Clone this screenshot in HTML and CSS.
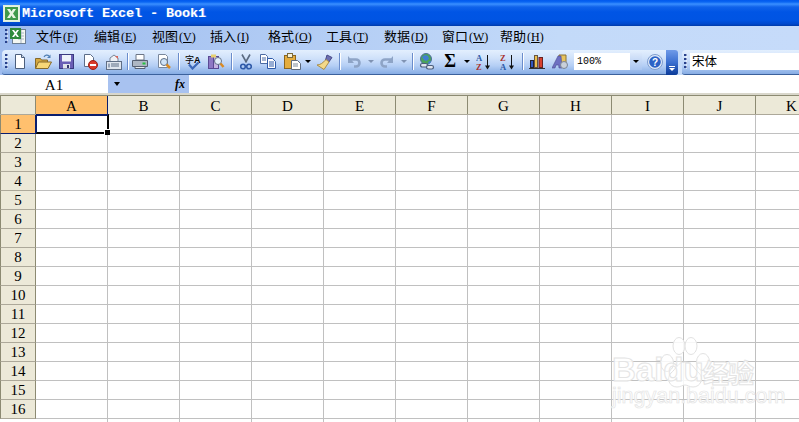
FILE: index.html
```html
<!DOCTYPE html>
<html lang="zh">
<head>
<meta charset="utf-8">
<title>Microsoft Excel - Book1</title>
<link rel="stylesheet" href="styles.css">
</head>
<body>
<div class="app">
  <header class="titlebar">
    <svg class="appicon" width="17" height="17" viewBox="0 0 17 17"><rect x=".5" y=".5" width="16" height="16" fill="#e8f3e4" stroke="#dfeedd"/><rect x="2" y="2" width="13" height="13" fill="#3f9a4c"/><path d="M4 4h3l1.500 2.500L10 4h3l-3 4.500L13 13h-3L8.500 10.500 7 13H4l3-4.500z" fill="#e8f5e4"/></svg>
    <span class="title">Microsoft Excel - Book1</span>
  </header>

  <nav class="menubar">
    <span class="grip"></span>
    <svg class="menuicon" width="18" height="18" viewBox="0 0 18 18"><rect x="3.500" y="2.500" width="13" height="14" fill="#f4f7f2" stroke="#6d7f93"/><path d="M9 6h6M9 9h6M9 12h6M12 3v13" stroke="#a7b5c5"/><rect x="1" y="1" width="11" height="11" fill="#2f8a3c"/><path d="M3 3h2l1.500 2L8 3h2L7.500 6.500 10 10H8L6.500 8 5 10H3l2.500-3.500z" fill="#fff"/></svg>
    <div class="menus">
      <span class="menu">文件<span class="key">(<u>F</u>)</span></span>
      <span class="menu">编辑<span class="key">(<u>E</u>)</span></span>
      <span class="menu">视图<span class="key">(<u>V</u>)</span></span>
      <span class="menu">插入<span class="key">(<u>I</u>)</span></span>
      <span class="menu">格式<span class="key">(<u>O</u>)</span></span>
      <span class="menu">工具<span class="key">(<u>T</u>)</span></span>
      <span class="menu">数据<span class="key">(<u>D</u>)</span></span>
      <span class="menu">窗口<span class="key">(<u>W</u>)</span></span>
      <span class="menu">帮助<span class="key">(<u>H</u>)</span></span>
    </div>
  </nav>

  <div class="toolrow">
    <div class="toolbar std">
      <span class="grip"></span>
      <span class="tool"><svg width="16" height="16" viewBox="0 0 16 16"><path d="M3.500 .5h6l3 3v11h-9z" fill="#fff" stroke="#4b5f7d"/><path d="M9.500.5v3h3" fill="#cfdbea" stroke="#4b5f7d"/></svg></span>
      <span class="tool"><svg width="17" height="16" viewBox="0 0 17 16"><path d="M.5 4.500h5l1 1.500h6v8H.5z" fill="#d6a93f" stroke="#85692a"/><path d="M.5 14.500l3-6.500h13l-3.500 6.500z" fill="#f7d777" stroke="#85692a"/><path d="M9 3c1-2 3.500-2.500 5-1" fill="none" stroke="#4f7fb4" stroke-width="1.200"/><path d="M15.500 .5v3.500h-3.500z" fill="#4f7fb4"/></svg></span>
      <span class="tool"><svg width="15" height="15" viewBox="0 0 15 15"><rect x=".5" y=".5" width="14" height="14" fill="#6a5fb5" stroke="#3b3a80"/><rect x="3" y="1" width="9" height="6.500" fill="#eef2fa"/><rect x="4" y="10" width="7" height="4.500" fill="#dfe3ea"/><rect x="8" y="11" width="2" height="3" fill="#33356e"/></svg></span>
      <span class="tool"><svg width="15" height="16" viewBox="0 0 15 16"><path d="M1.500 .5h6l3 3v9h-9z" fill="#fff" stroke="#5c6d88"/><circle cx="10" cy="11" r="4.500" fill="#d93a2b" stroke="#9c2116"/><rect x="7" y="10" width="6" height="2" fill="#fff"/></svg></span>
      <span class="tool"><svg width="16" height="16" viewBox="0 0 16 16"><path d="M4 8V4l4-3 4 3v4z" fill="#eef1f6" stroke="#7b8798"/><path d="M9 2h3v3" fill="#d9675a"/><rect x=".5" y="7.500" width="15" height="8" fill="#dfe5ee" stroke="#5f6e85"/><path d="M5 10h8M5 12h8" stroke="#5f6e85"/><rect x="2" y="9.500" width="2" height="4" fill="#95a3b8"/></svg></span>
      <span class="sep"></span>
      <span class="tool"><svg width="16" height="15" viewBox="0 0 16 15"><path d="M4 6V.5h8V6z" fill="#fff" stroke="#6d7686"/><path d="M.5 6.500h15v6H.5z" fill="#aeb7c4" stroke="#566073"/><path d="M3 12.500h10v2H3z" fill="#e8ebf0" stroke="#566073"/><rect x="10.500" y="8.500" width="3" height="2" fill="#25c23f"/></svg></span>
      <span class="tool"><svg width="16" height="16" viewBox="0 0 16 16"><path d="M2.500.5h7l2 2v11h-9z" fill="#fff" stroke="#79879c"/><circle cx="8" cy="8" r="3.500" fill="#cfe3f8" stroke="#5d6f88"/><path d="M10.500 10.500l3.500 3.500" stroke="#d98a24" stroke-width="2.500"/></svg></span>
      <span class="sep wide"></span>
      <span class="tool"><svg width="17" height="16" viewBox="0 0 17 16"><text class="ic-cjk" x="0" y="9">字</text><text class="ic-a" x="9" y="8.500">A</text><path d="M4 10.500l3.500 4 6-6" fill="none" stroke="#3c68b8" stroke-width="2.200"/></svg></span>
      <span class="tool"><svg width="17" height="16" viewBox="0 0 17 16"><rect x=".5" y="2.500" width="5" height="12" fill="#8d78c4" stroke="#5a4a94"/><rect x="5.500" y="2.500" width="5" height="12" fill="#c6b4e2" stroke="#5a4a94"/><rect x="3" y=".5" width="5" height="3" fill="#e6d070"/><circle cx="10" cy="7" r="3.500" fill="#e4f0fb" stroke="#64748c"/><path d="M12.500 9.500l3 3.500" stroke="#d98a24" stroke-width="2.500"/></svg></span>
      <span class="sep wide"></span>
      <span class="tool"><svg width="12" height="16" viewBox="0 0 12 16"><path d="M2 .5l4.500 8M10 .5L5.500 8.500" stroke="#5b6b82" stroke-width="1.600"/><circle cx="3" cy="12.500" r="2.300" fill="none" stroke="#2f5aa8" stroke-width="1.600"/><circle cx="9" cy="12.500" r="2.300" fill="none" stroke="#2f5aa8" stroke-width="1.600"/></svg></span>
      <span class="tool copy"><svg width="16" height="15" viewBox="0 0 16 15"><path d="M.5.5h5l2 2v7h-7z" fill="#fff" stroke="#4c6ba3"/><path d="M2 4h4M2 6h4" stroke="#4c6ba3"/><path d="M7.500 4.500h5l3 3v7h-8z" fill="#fff" stroke="#2f5aa8"/><path d="M9 8h5M9 10h5M9 12h5" stroke="#2f5aa8"/></svg></span>
      <span class="tool paste"><svg width="17" height="17" viewBox="0 0 17 17"><rect x=".5" y="2.500" width="11" height="13" fill="#e5ad3d" stroke="#8c6620"/><rect x="3.500" y=".5" width="5" height="4" fill="#f7f0d7" stroke="#7a6a3a"/><path d="M7.500 7.500h6l3 3v6h-9z" fill="#fff" stroke="#5f6b7e"/><path d="M9 11h5M9 13h5" stroke="#7d899b"/></svg></span>
      <span class="drop"></span>
      <span class="tool"><svg width="17" height="16" viewBox="0 0 17 16"><path d="M11 1l5 2.500-3.500 5-3-2.500z" fill="#6d6fb0" stroke="#474a88"/><path d="M10 5.500l3 2.500L8 15.500 1 11c3 0 6-2 9-5.500z" fill="#f3d98a" stroke="#a98d48"/></svg></span>
      <span class="sep wide"></span>
      <span class="tool"><svg width="14" height="14" viewBox="0 0 14 14"><path d="M3 4.500h6a3.500 3.500 0 0 1 0 7H7" fill="none" stroke="#8ea4c6" stroke-width="2.600"/><path d="M1 1v7h6z" fill="#8ea4c6"/></svg></span>
      <span class="drop off"></span>
      <span class="tool"><svg width="14" height="14" viewBox="0 0 14 14"><path d="M11 4.500H5a3.500 3.500 0 0 0 0 7h2" fill="none" stroke="#8ea4c6" stroke-width="2.600"/><path d="M13 1v7H7z" fill="#8ea4c6"/></svg></span>
      <span class="drop off"></span>
      <span class="sep wide"></span>
      <span class="tool"><svg width="16" height="17" viewBox="0 0 16 17"><circle cx="7" cy="6" r="5.500" fill="#4ba35a" stroke="#4d6d9c"/><path d="M3 4l3-2 3 1 1 3-3 2-2-1zM9 9l2-1 1 1-2 2z" fill="#3f7fd0"/><rect x="1.500" y="10.500" width="7" height="3.500" rx="1.700" fill="#dfe5ee" stroke="#4d5f7c" stroke-width="1.200"/><rect x="7.500" y="12.500" width="7" height="3.500" rx="1.700" fill="#dfe5ee" stroke="#4d5f7c" stroke-width="1.200"/></svg></span>
      <span class="tool sigma">Σ</span>
      <span class="drop"></span>
      <span class="tool"><svg width="15" height="16" viewBox="0 0 15 16"><text class="ic-s blue" x="0" y="7">A</text><text class="ic-s red" x="0" y="15.500">Z</text><path d="M11.500 1v12" stroke="#111"/><path d="M9 11.500h5l-2.500 4z" fill="#111"/></svg></span>
      <span class="tool"><svg width="15" height="16" viewBox="0 0 15 16"><text class="ic-s red" x="0" y="7">Z</text><text class="ic-s blue" x="0" y="15.500">A</text><path d="M11.500 1v12" stroke="#111"/><path d="M9 11.500h5l-2.500 4z" fill="#111"/></svg></span>
      <span class="sep wide"></span>
      <span class="tool"><svg width="16" height="15" viewBox="0 0 16 15"><rect x="1.500" y="6.500" width="3" height="7" fill="#3157c0" stroke="#223"/><rect x="5.500" y="1.500" width="3" height="12" fill="#eec04a" stroke="#654"/><rect x="10" y="3.500" width="3.500" height="10" fill="#d9402e" stroke="#622"/><path d="M0 14.500h16" stroke="#333"/></svg></span>
      <span class="tool"><svg width="16" height="15" viewBox="0 0 16 15"><path d="M7 1h7v8H7z" fill="#e8c35c" stroke="#8c7332"/><path d="M0 14L6 2h3l1 12H7l-.3-3H4l-1 3z" fill="#6e70c2" stroke="#4a4c90" stroke-width=".6"/><circle cx="12" cy="11" r="3.500" fill="#c9d0da" stroke="#7a8494"/></svg></span>
      <span class="zoombox"><span class="zoomval">100%</span><span class="zoomarrow"></span></span>
      <span class="tool help"><svg width="16" height="16" viewBox="0 0 16 16"><circle cx="8" cy="8" r="7.500" fill="#dfe9f8" stroke="#7d9cce"/><circle cx="8" cy="8" r="5.800" fill="#2c62c6"/><text class="ic-q" x="8" y="12" text-anchor="middle">?</text></svg></span>
      <span class="chevron"><span class="chev-line"></span><span class="chev-tri"></span></span>
    </div>
    <div class="toolbar fmt">
      <span class="grip"></span>
      <span class="fontbox">宋体</span>
    </div>
  </div>

  <div class="formulabar">
    <span class="namebox">A1</span>
    <span class="namedrop"><span class="nd-arrow"></span><span class="fx">fx</span></span>
    <span class="formula"></span>
  </div>

  <main class="sheet">
    <div class="colheads">
      <span class="corner"></span>
      <span class="ch on">A</span><span class="ch">B</span><span class="ch">C</span><span class="ch">D</span><span class="ch">E</span><span class="ch">F</span><span class="ch">G</span><span class="ch">H</span><span class="ch">I</span><span class="ch">J</span><span class="ch">K</span>
    </div>
    <div class="body">
      <div class="rowheads">
        <span class="rh on">1</span><span class="rh">2</span><span class="rh">3</span><span class="rh">4</span><span class="rh">5</span><span class="rh">6</span><span class="rh">7</span><span class="rh">8</span><span class="rh">9</span><span class="rh">10</span><span class="rh">11</span><span class="rh">12</span><span class="rh">13</span><span class="rh">14</span><span class="rh">15</span><span class="rh">16</span>
      </div>
      <div class="cells">
        <div class="active"><span class="handle"></span></div>
      </div>
    </div>
  </main>

  <aside class="watermark">
    <svg class="paw" width="52" height="56" viewBox="0 0 52 56"><g fill="#fff" fill-opacity=".85" stroke="#e2e2e2"><ellipse cx="8" cy="27" rx="6.500" ry="8.500"/><ellipse cx="20" cy="10" rx="6" ry="8.500"/><ellipse cx="32" cy="10" rx="6" ry="8.500"/><ellipse cx="44" cy="26" rx="6.500" ry="8.500"/><path d="M26 26c7 0 9 7 14 11 5 5 2 14-6 14-4 0-5-2-8-2s-4 2-8 2c-8 0-11-9-6-14 5-4 7-11 14-11z"/></g></svg>
    <span class="wm-baidu">Bai<span class="wm-gap">du</span></span>
    <span class="wm-cn">经验</span>
    <span class="wm-url">jingyan.baidu.com</span>
  </aside>
</div>
</body>
</html>
```

FILE: styles.css
```css
* { box-sizing: border-box; }
html, body { margin: 0; padding: 0; background: #fff; }
body { width: 799px; height: 422px; overflow: hidden; font-family: "Liberation Mono", "Noto Sans CJK SC", monospace; }
.app { position: relative; width: 799px; height: 422px; overflow: hidden; display: flex; flex-direction: column; }

.titlebar { height: 26px; flex: none; display: flex; align-items: center; padding-left: 3px;
  background: linear-gradient(#0058ee 0, #0a66f2 2px, #3a8fff 4px, #0f62ea 7px, #0055e5 12px, #0054e3 20px, #0048cc 24px, #003aa8 26px); }
.appicon { flex: none; }
.title { margin-left: 2px; color: #fff; font: bold 13.33px "Liberation Mono", monospace; white-space: pre; text-shadow: 1px 0 0 rgba(255,255,255,.25); }

.menubar { height: 24px; flex: none; display: flex; align-items: center; padding: 0 0 4px 5px;
  background: linear-gradient(90deg, #9ebcef 0, #c3daf9 70%, #c6dbfa 100%); }
.grip { flex: none; width: 3px; height: 14px; background: repeating-linear-gradient(#27418c 0 2px, transparent 2px 4px); border-right: 1px solid rgba(255,255,255,.5); }
.menuicon { flex: none; margin-left: 1px; }
.menus { display: flex; margin-left: 9px; }
.menu { width: 58px; font: 13px "Noto Sans CJK SC", sans-serif; color: #000; white-space: nowrap; line-height: 18px; }
.key { font: 12px "Liberation Serif", serif; margin-left: 1px; }

.toolrow { height: 25px; flex: none; display: flex; padding-left: 2px; background: linear-gradient(90deg, #9ebcef 0, #c3daf9 70%, #c6dbfa 100%); }
.toolbar { display: flex; align-items: center; height: 25px; padding-bottom: 1px; border-bottom: 1px solid #3b619c; border-radius: 4px 4px 3px 3px;
  background: linear-gradient(#e3effe 0, #cfe1fa 35%, #b5cff5 65%, #86acE4 100%); }
.std { width: 676px; padding-left: 3px; position: relative; }
.fmt { flex: 1; margin-left: 4px; padding-left: 2px; border-radius: 4px 0 0 3px; }
.toolbar .grip { height: 15px; }
.tool { flex: none; width: 23.5px; height: 22px; display: flex; align-items: center; justify-content: center; }
.tool.copy { padding-right: 3px; }
.tool.paste { width: 21px; }
.sep { flex: none; width: 3px; height: 17px; background: linear-gradient(90deg, transparent 0 1px, #6a8ccb 1px 2px, #fff 2px 3px); background-size: 3px 100%; }
.sep.wide { width: 6px; background-position: center; background-repeat: no-repeat; }
.drop { flex: none; width: 10px; height: 10px; position: relative; }
.drop::after { content: ""; position: absolute; left: 2px; top: 3px; border: 3px solid transparent; border-top: 3px solid #000; }
.drop.off::after { border-top-color: #8093b3; }
.sigma { font: bold 18px "Liberation Serif", serif; color: #000; padding-bottom: 1px; }
.ic-cjk { font: 9px "Noto Sans CJK SC", sans-serif; fill: #000; }
.ic-a { font: bold 9px "Liberation Sans", sans-serif; fill: #000; }
.ic-s { font: bold 8.500px "Liberation Serif", serif; }
.ic-s.blue { fill: #2c5aa8; }
.ic-s.red { fill: #a8322e; }
.ic-q { font: bold 10px "Liberation Sans", sans-serif; fill: #fff; }
.zoombox { flex: none; width: 68px; height: 17px; margin-left: 2px; background: #fff; display: flex; align-items: center; justify-content: space-between; }
.zoomval { font: 10px "Liberation Mono", monospace; padding-left: 3px; }
.zoomarrow { width: 12px; height: 100%; background: linear-gradient(#dbe8fb, #a9c5f0); position: relative; }
.zoomarrow::after { content: ""; position: absolute; left: 3px; top: 7px; border: 3px solid transparent; border-top-color: #000; }
.tool.help { margin-left: 1px; }
.chevron { position: absolute; right: 0; top: 0; width: 12px; height: 25px; border-radius: 0 3px 3px 0; background: linear-gradient(#6f9ae8 0, #3a6fd0 50%, #0a3a98 100%); }
.chev-line { position: absolute; left: 3px; top: 16px; width: 6px; height: 1px; background: #fff; }
.chev-tri { position: absolute; left: 3px; top: 18px; border: 3px solid transparent; border-top: 3px solid #fff; }
.fontbox { flex: 1; height: 17px; margin-left: 3px; background: #fff; font: 12.5px/16px "Noto Sans CJK SC", sans-serif; padding-left: 2px; color: #000; }

.formulabar { height: 20px; flex: none; display: flex; background: #fff; border-bottom: 2px solid #d9d7cb; }
.namebox { width: 108px; text-align: center; font: 15px/21px "Liberation Serif", serif; color: #000; }
.namedrop { width: 81px; background: #a8c2f0; position: relative; }
.nd-arrow { position: absolute; left: 6px; top: 7px; border: 3.500px solid transparent; border-top: 4px solid #000; }
.fx { position: absolute; right: 4px; top: 1px; font: italic bold 12px/16px "Liberation Serif", serif; }
.formula { flex: 1; }

.sheet { flex: 1; display: flex; flex-direction: column; min-height: 0; }
.colheads { height: 20px; flex: none; display: flex; background: #ece9d8; border-top: 1px solid #8c8a72; border-bottom: 1px solid #aca899; }
.corner { flex: none; width: 36px; border-right: 1px solid #8c8a72; border-left: 1px solid #8c8a72; }
.ch { flex: none; width: 72px; text-align: center; font: 15px/21px "Liberation Serif", serif; color: #000; border-right: 1px solid #8c8a72; }
.ch.on { background: #ffc06e; border-right-color: #0a1e6e; box-shadow: 0 1px 0 #0a1e6e; }
.body { flex: 1; display: flex; min-height: 0; }
.rowheads { flex: none; width: 36px; display: flex; flex-direction: column; }
.rh { flex: none; height: 19px; width: 36px; text-align: center; font: 15px/19px "Liberation Serif", serif; color: #000; background: #ece9d8; border-right: 1px solid #8c8a72; border-bottom: 1px solid #aca899; border-left: 1px solid #8c8a72; }
.rh.on { background: #ffc06e; border-bottom-color: #0a1e6e; border-right-color: #0a1e6e; }
.cells { flex: 1; position: relative; background-color: #fff;
  background-image: linear-gradient(90deg, transparent 71px, #c0c0c0 71px), linear-gradient(transparent 18px, #c0c0c0 18px);
  background-size: 72px 19px; }
.active { position: absolute; left: 0; top: -1px; width: 73px; height: 20px; border: 2px solid #000; border-top-color: #0a1e6e; border-left-color: #0a1e6e; border-left-width: 1px; background: #fff; }
.handle { position: absolute; right: -3px; bottom: -3px; width: 6px; height: 6px; background: #000; border: 1px solid #fff; border-width: 1px 0 0 1px; }

.watermark { position: absolute; left: 612px; top: 336px; width: 145px; height: 70px; color: #fff; pointer-events: none; }
.paw { position: absolute; left: 47px; top: 0; }
.wm-baidu { position: absolute; left: 0; top: 20px; font: bold 33px/28px "Liberation Sans", sans-serif; color: rgba(255,255,255,.85); -webkit-text-stroke: 1px #e4e4e4; }
.wm-gap { color: rgba(255,255,255,.4); }
.wm-cn { position: absolute; left: 91px; top: 24px; font: bold 26px/24px "Noto Sans CJK SC", sans-serif; color: rgba(255,255,255,.85); -webkit-text-stroke: 1px #e4e4e4; letter-spacing: -1px; }
.wm-url { position: absolute; left: 0; top: 50px; font: 21.500px/20px "Liberation Sans", sans-serif; color: rgba(255,255,255,.85); -webkit-text-stroke: .7px #e4e4e4; white-space: nowrap; }
```
